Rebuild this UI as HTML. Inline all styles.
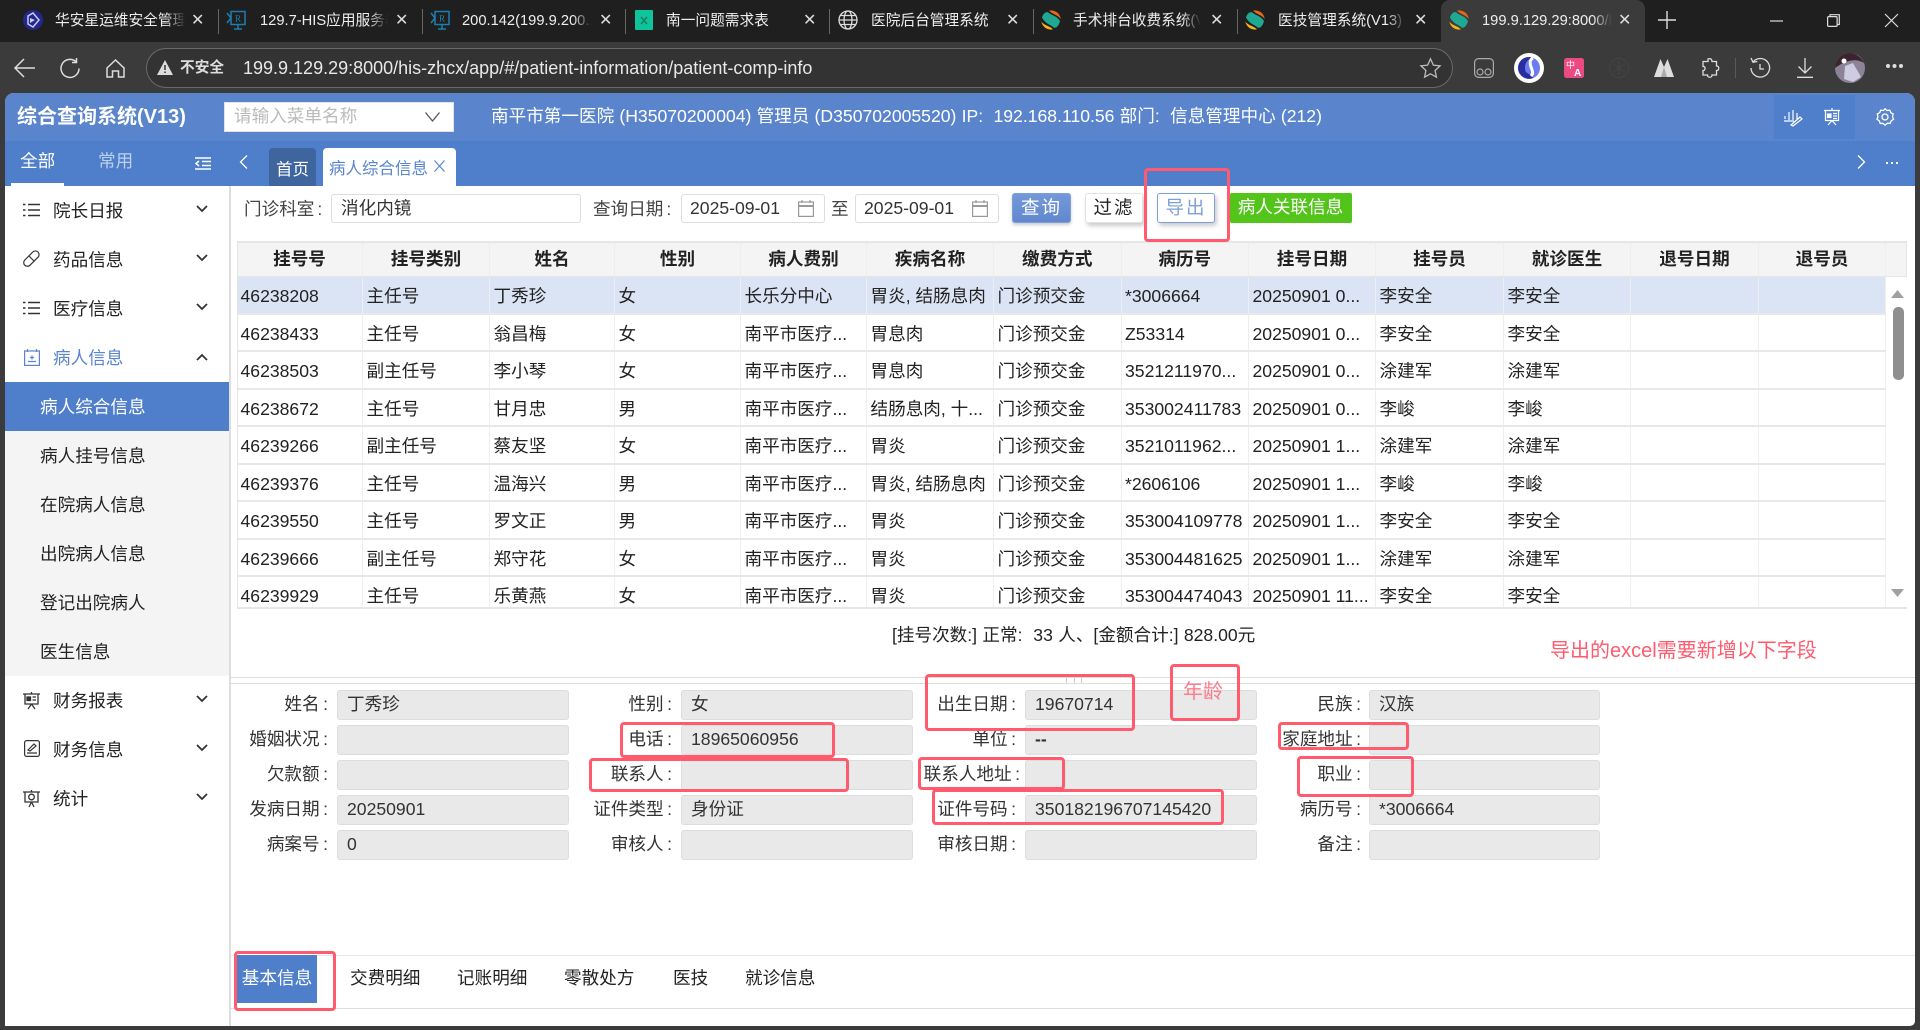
<!DOCTYPE html>
<html lang="zh-CN"><head><meta charset="utf-8"><title>综合查询系统(V13)</title>
<style>
*{box-sizing:border-box;margin:0;padding:0}
html,body{width:1920px;height:1030px;overflow:hidden;background:#3b3b3b;font-family:"Liberation Sans","Noto Sans CJK SC",sans-serif;font-size:17.6px;color:#222}
.a{position:absolute;white-space:nowrap}
svg{position:absolute;overflow:visible}
.tb{position:absolute;top:9px;height:26px;line-height:24px;font-size:14.7px;color:#eee;white-space:nowrap;overflow:hidden;-webkit-mask-image:linear-gradient(90deg,#000 85%,transparent);mask-image:linear-gradient(90deg,#000 85%,transparent)}
.sep{position:absolute;top:9px;width:1px;height:25px;background:#666}
.mi{position:absolute;left:53px;line-height:24px;height:24px;font-size:17.6px;color:#222;white-space:nowrap}
.si{position:absolute;left:40px;line-height:24px;height:24px;font-size:17.6px;color:#222;white-space:nowrap}
.ll{position:absolute;text-align:right;white-space:pre;line-height:30px;height:30px;color:#333;font-size:17.6px;word-spacing:-1.4px}
.in{position:absolute;width:232px;height:30px;background:#e9e9e9;border:1px solid #ddd;border-radius:3px;line-height:27px;padding-left:9px;color:#333;font-size:17.6px;white-space:nowrap}
.r{position:absolute;left:0;width:1649px;height:37.5px;display:flex;border-bottom:2px solid #e8e8e8;line-height:38px;background:#fff}
.r span{flex:0 0 127px;border-right:1px solid #eee;padding-left:3.5px;white-space:nowrap;overflow:hidden;color:#222;font-size:17.6px}
.r span:nth-child(1),.r span:nth-child(4),.r span:nth-child(5){flex-basis:126px}
.r span:nth-child(3){flex-basis:125px}
.r span:nth-child(7),.r span:nth-child(8){flex-basis:127.5px}
.r span:nth-child(10),.r span:nth-child(12){flex-basis:128px}
.r.h{background:#f4f4f4;height:36px;border-top:2px solid #e6e6e6;border-bottom:1px solid #e6e6e6;line-height:33px}
.r.h span{text-align:center;font-weight:bold;padding:0;color:#222}
.rb{position:absolute;border:3px solid #ff5a6e;border-radius:4px;pointer-events:none}
.tab2{position:absolute;top:966px;line-height:24px;color:#222;font-size:17.6px;white-space:nowrap}
</style></head><body>

<!-- browser tab strip -->
<div class="a" style="left:0;top:0;width:1920px;height:42px;background:#1f1f1f"></div>
<div class="a" style="left:1441px;top:0;width:204px;height:42px;background:#3b3b3b;border-radius:9px 9px 0 0"></div>

<svg style="left:23px;top:10px" width="20" height="20" viewBox="0 0 20 20"><circle cx="10" cy="10" r="10" fill="#23288a"/><path d="M5 6l5-3 6 7-6 7-5-3z" fill="none" stroke="#c8ccf0" stroke-width="1.500"/><path d="M7 8l5 2-5 3z" fill="#c8ccf0"/></svg>
<div class="tb" style="left:55px;width:130px">华安星运维安全管理</div>
<div class="a" style="left:191px;top:8px;color:#ddd;font-size:16px;line-height:26px">✕</div>
<div class="sep" style="left:218px"></div>
<svg style="left:226px;top:10px" width="20" height="20" viewBox="0 0 20 20"><rect x="5" y="1.500" width="14" height="13" fill="none" stroke="#1d7fb0" stroke-width="1.500"/><path d="M1 3l4 5-4 5M8 19h8M12 15v4" stroke="#1d7fb0" stroke-width="1.500" fill="none"/><text x="9" y="11.500" font-size="9" font-family="Liberation Serif" fill="#1d7fb0">R</text></svg>
<div class="tb" style="left:260px;width:128px">129.7-HIS应用服务器</div>
<div class="a" style="left:395px;top:8px;color:#ddd;font-size:16px;line-height:26px">✕</div>
<div class="sep" style="left:422px"></div>
<svg style="left:430px;top:10px" width="20" height="20" viewBox="0 0 20 20"><rect x="5" y="1.500" width="14" height="13" fill="none" stroke="#1d7fb0" stroke-width="1.500"/><path d="M1 3l4 5-4 5M8 19h8M12 15v4" stroke="#1d7fb0" stroke-width="1.500" fill="none"/><text x="9" y="11.500" font-size="9" font-family="Liberation Serif" fill="#1d7fb0">R</text></svg>
<div class="tb" style="left:462px;width:130px">200.142(199.9.200.142)</div>
<div class="a" style="left:599px;top:8px;color:#ddd;font-size:16px;line-height:26px">✕</div>
<div class="sep" style="left:625px"></div>
<svg style="left:635px;top:10px" width="18" height="20" viewBox="0 0 18 20"><rect width="18" height="20" rx="1" fill="#0fc49a"/><path d="M6 7l6 7M12 7l-6 7" stroke="#0a7f66" stroke-width="1.500"/></svg>
<div class="tb" style="left:666px;width:130px;-webkit-mask-image:none;mask-image:none">南一问题需求表</div>
<div class="a" style="left:803px;top:8px;color:#ddd;font-size:16px;line-height:26px">✕</div>
<div class="sep" style="left:829px"></div>
<svg style="left:838px;top:10px" width="20" height="20" viewBox="0 0 20 20" fill="none" stroke="#ddd" stroke-width="1.300"><circle cx="10" cy="10" r="9"/><ellipse cx="10" cy="10" rx="4" ry="9"/><path d="M1 10h18M2.500 5.500h15M2.500 14.500h15"/></svg>
<div class="tb" style="left:871px;width:122px;-webkit-mask-image:none;mask-image:none">医院后台管理系统</div>
<div class="a" style="left:1006px;top:8px;color:#ddd;font-size:16px;line-height:26px">✕</div>
<div class="sep" style="left:1033px"></div>
<svg style="left:1041px;top:10px" width="20" height="20" viewBox="0 0 20 20"><path d="M8 .7A9.500 9.500 0 0 1 19.700 9C17 5 12 4.500 8 .7z" fill="#e8671b"/><path d="M.4 11.500C3 15.500 8 15.500 12 19.300A9.500 9.500 0 0 1 .4 11.500z" fill="#f5b41f"/><path d="M1 7.500C2.500 2.500 6 1 8 3c3 2.500 8 3 11 8-1.500 6-5 8-7 6-3-2.500-8-3.500-11-9.500z" fill="#1fa892"/></svg>
<div class="tb" style="left:1073px;width:128px">手术排台收费系统(V13)</div>
<div class="a" style="left:1210px;top:8px;color:#ddd;font-size:16px;line-height:26px">✕</div>
<div class="sep" style="left:1237px"></div>
<svg style="left:1245px;top:10px" width="20" height="20" viewBox="0 0 20 20"><path d="M8 .7A9.500 9.500 0 0 1 19.700 9C17 5 12 4.500 8 .7z" fill="#e8671b"/><path d="M.4 11.500C3 15.500 8 15.500 12 19.300A9.500 9.500 0 0 1 .4 11.500z" fill="#f5b41f"/><path d="M1 7.500C2.500 2.500 6 1 8 3c3 2.500 8 3 11 8-1.500 6-5 8-7 6-3-2.500-8-3.500-11-9.500z" fill="#1fa892"/></svg>
<div class="tb" style="left:1278px;width:128px">医技管理系统(V13)</div>
<div class="a" style="left:1414px;top:8px;color:#ddd;font-size:16px;line-height:26px">✕</div>
<svg style="left:1449px;top:10px" width="20" height="20" viewBox="0 0 20 20"><path d="M8 .7A9.500 9.500 0 0 1 19.700 9C17 5 12 4.500 8 .7z" fill="#e8671b"/><path d="M.4 11.500C3 15.500 8 15.500 12 19.300A9.500 9.500 0 0 1 .4 11.500z" fill="#f5b41f"/><path d="M1 7.500C2.500 2.500 6 1 8 3c3 2.500 8 3 11 8-1.500 6-5 8-7 6-3-2.500-8-3.500-11-9.500z" fill="#1fa892"/></svg>
<div class="tb" style="left:1482px;width:130px">199.9.129.29:8000/his-zhcx</div>
<div class="a" style="left:1618px;top:8px;color:#ddd;font-size:16px;line-height:26px">✕</div>
<svg style="left:1658px;top:11px" width="18" height="18" viewBox="0 0 18 18" stroke="#ddd" stroke-width="1.400"><path d="M9 0v18M0 9h18"/></svg>
<svg style="left:1770px;top:20px" width="13" height="2" viewBox="0 0 13 2"><path d="M0 1h13" stroke="#ddd" stroke-width="1.200"/></svg>
<svg style="left:1827px;top:14px" width="13" height="13" viewBox="0 0 13 13" fill="none" stroke="#ddd" stroke-width="1.200"><rect x=".6" y="2.600" width="9.500" height="9.800" rx="1"/><path d="M3 2.600V.7h9.300v9.800h-2.200"/></svg>
<svg style="left:1885px;top:14px" width="13" height="13" viewBox="0 0 13 13" stroke="#ddd" stroke-width="1.200"><path d="M0 0l13 13M13 0L0 13"/></svg>

<!-- browser toolbar -->
<svg style="left:14px;top:58px" width="21" height="20" viewBox="0 0 21 20" fill="none" stroke="#ddd" stroke-width="1.500"><path d="M10 1L1 10l9 9M1 10h20"/></svg>
<svg style="left:60px;top:58px" width="21" height="21" viewBox="0 0 21 21" fill="none" stroke="#ddd" stroke-width="1.500"><path d="M19 10.500a9 9 0 1 1-3-6.800"/><path d="M16.500 0v4.500H12"/></svg>
<svg style="left:106px;top:59px" width="19" height="19" viewBox="0 0 19 19" fill="none" stroke="#ddd" stroke-width="1.500"><path d="M1 9l8.500-8L18 9v9h-5.500v-6h-6v6H1z"/></svg>
<div class="a" style="left:146px;top:48px;width:1307px;height:40px;border:1px solid #6a6a6a;border-radius:20px;background:#333"></div>
<svg style="left:157px;top:60px" width="16" height="15" viewBox="0 0 16 15"><path d="M8 0l8 15H0z" fill="#ddd"/><path d="M8 5v5M8 11.500v1.500" stroke="#333" stroke-width="1.500"/></svg>
<div class="a" style="left:180px;top:56px;line-height:24px;font-size:14.7px;font-weight:bold;color:#ddd">不安全</div>
<div class="a" style="left:243px;top:55px;line-height:26px;font-size:18px;color:#e8e8e8">199.9.129.29:8000/his-zhcx/app/#/patient-information/patient-comp-info</div>
<svg style="left:1420px;top:58px" width="21" height="20" viewBox="0 0 24 23" fill="none" stroke="#bbb" stroke-width="1.500"><path d="M12 1l3.300 7.200 7.700.9-5.700 5.300 1.500 7.600L12 18.200 5.200 22l1.500-7.600L1 9.100l7.700-.9z"/></svg>
<svg style="left:1474px;top:58px" width="20" height="20" viewBox="0 0 20 20" fill="none" stroke="#aaa" stroke-width="1.200"><rect x=".6" y=".6" width="18.800" height="18.800" rx="4"/><circle cx="6" cy="14" r="3"/><circle cx="14" cy="14" r="3"/></svg>
<svg style="left:1514px;top:53px" width="30" height="30" viewBox="0 0 30 30"><circle cx="15" cy="15" r="15" fill="#fff"/><circle cx="15" cy="15" r="11" fill="#6b7cf0"/><path d="M4 15a11 11 0 0 0 15 10c-3-6-8-3-8-10s4-8 6-10.800A11 11 0 0 0 4 15z" fill="#2a2e9c"/><path d="M19 5c-4 2-3 6-2 9s3 6 0 9" fill="none" stroke="#fff" stroke-width="3"/></svg>
<svg style="left:1564px;top:58px" width="20" height="20" viewBox="0 0 20 20"><rect width="20" height="20" rx="2.500" fill="#ec4a83"/><text x="2" y="10" font-size="9" fill="#fff" font-family="Noto Sans CJK SC">中</text><text x="10" y="18" font-size="10" fill="#fff" font-weight="bold" font-family="Liberation Sans">A</text></svg>
<svg style="left:1609px;top:58px" width="20" height="20" viewBox="0 0 20 20" fill="none" stroke="#444" stroke-width="1"><circle cx="10" cy="10" r="9.500"/><path d="M10 3v14M4 6l12 8M16 6L4 14"/></svg>
<svg style="left:1654px;top:59px" width="20" height="18" viewBox="0 0 20 18"><path d="M0 18L6.500 0 10 8l3.500-8L20 18z" fill="#ddd"/><path d="M10 8L7 18h6z" fill="#aaa"/></svg>
<svg style="left:1700px;top:58px" width="20" height="20" viewBox="0 0 20 20" fill="none" stroke="#ddd" stroke-width="1.300"><path d="M8 1c2-1 4 0 4 2.500h4.500V8c3-.5 3 5 0 4.500V17H12c.5 3-5 3-4.500 0H3v-4.500c2.500.5 3-4.500 0-4V3.500h5z"/></svg>
<div class="a" style="left:1735px;top:58px;width:1px;height:20px;background:#5a5a5a"></div>
<svg style="left:1750px;top:58px" width="20" height="21" viewBox="0 0 20 21" fill="none" stroke="#ddd" stroke-width="1.300"><path d="M3 4a9.300 9.300 0 1 1-2 6"/><path d="M1 0l2 4.300 4.300-.8"/><path d="M10 6v5h4"/></svg>
<svg style="left:1797px;top:58px" width="16" height="20" viewBox="0 0 16 20" fill="none" stroke="#ddd" stroke-width="1.300"><path d="M8 0v15M1.500 8.500L8 15l6.500-6.500M0 19.300h16"/></svg>
<svg style="left:1835px;top:53px" width="30" height="30" viewBox="0 0 30 30"><circle cx="15" cy="15" r="15" fill="#8d8396"/><path d="M0 15a15 15 0 0 1 15-15c6 0 12 5 14 10-8-5-18-3-29 5z" fill="#3b2330"/><path d="M10 13l8-3 8 14-8 5-9-3z" fill="#cfcbe0"/><circle cx="9" cy="8" r="2.500" fill="#fff"/></svg>
<div class="a" style="left:1886px;top:64px;width:4px;height:4px;border-radius:50%;background:#ddd;box-shadow:6.500px 0 #ddd,13px 0 #ddd"></div>

<!-- app frame -->
<div class="a" style="left:5px;top:93px;width:1910px;height:933px;background:#fff;border-radius:9px 9px 5px 5px;overflow:hidden">
  <div class="a" style="left:0;top:0;width:1910px;height:48px;background:#5a85cd"></div>
  <div class="a" style="left:0;top:48px;width:1910px;height:45px;background:#4f7fca"></div>
</div>
<div class="a" style="left:17px;top:101px;line-height:32px;font-size:20px;font-weight:bold;color:#fff">综合查询系统(V13)</div>
<div class="a" style="left:224px;top:102px;width:230px;height:30px;background:#fff;border:1px solid #e3e3e3;line-height:26px;padding-left:9px;color:#bbb;font-size:17.6px">请输入菜单名称</div>
<svg style="left:425px;top:112px" width="15" height="10" viewBox="0 0 15 10" fill="none" stroke="#555" stroke-width="1.300"><path d="M.5.5l7 8.500 7-8.500"/></svg>
<div class="a" style="left:491px;top:102px;line-height:28px;font-size:17.6px;color:#fff;word-spacing:.3px">南平市第一医院 (H35070200004) 管理员 (D350702005520) IP:&nbsp; 192.168.110.56 部门:&nbsp; 信息管理中心 (212)</div>
<div class="a" style="left:1774px;top:95px;width:81px;height:44px;background:#4f7fca"></div>
<svg style="left:1784px;top:108px" width="18" height="18" viewBox="0 0 18 18" fill="none" stroke="#fff" stroke-width="1.200"><path d="M1 8v3M5 4v8M9 2v10M13 5v6M0 13h10M7 17l9-8 2 2-9 7z"/></svg>
<svg style="left:1823px;top:108px" width="18" height="18" viewBox="0 0 18 18" fill="none" stroke="#fff" stroke-width="1.200"><path d="M1 2.500h16M2.500 2.500v10h13v-10M9 0v2.500M9 12.500L5 17M9 12.500l4 4.500"/><rect x="4.500" y="6" width="3.500" height="3.500" fill="#fff"/><path d="M10 5.500h4M10 8h4M10 10.500h4"/></svg>
<svg style="left:1876px;top:108px" width="18" height="18" viewBox="0 0 18 18" fill="none" stroke="#fff" stroke-width="1.300"><path d="M9 .8l2 1.700 2.800-.3 1 2.500 2.400 1.300-.7 2.700 1 2.600-2.300 1.500-.9 2.500-2.700-.1L9 17.200l-2.100-1.900-2.700.1-.9-2.500L1 11.300l1-2.600-.7-2.700 2.400-1.300 1-2.500 2.800.3z"/><circle cx="9" cy="9" r="3"/></svg>

<div class="a" style="left:20px;top:149px;line-height:24px;font-size:17.6px;color:#fff">全部</div>
<div class="a" style="left:98px;top:149px;line-height:24px;font-size:17.6px;color:#bcd0ec">常用</div>
<div class="a" style="left:11px;top:183px;width:53px;height:3px;background:#fff"></div>
<svg style="left:195px;top:157px" width="16" height="13" viewBox="0 0 16 13" stroke="#fff" stroke-width="1.500" fill="none"><path d="M0 1h16M7 4.500h9M7 8.500h9M0 12h16M4 4l-3 2.500L4 9"/></svg>
<svg style="left:239px;top:155px" width="9" height="14" viewBox="0 0 9 14" fill="none" stroke="#fff" stroke-width="1.300"><path d="M8 .5L1.500 7 8 13.500"/></svg>
<div class="a" style="left:269px;top:148px;width:47px;height:38px;background:#3f659f;border-radius:4px 4px 0 0;color:#fff;text-align:center;line-height:44px;font-size:16.5px">首页</div>
<div class="a" style="left:323px;top:148px;width:133px;height:38px;background:#fff;border-radius:4px 4px 0 0;color:#5a85cd;line-height:42px;font-size:16.5px;padding-left:6px">病人综合信息</div>
<svg style="left:434px;top:160px" width="11" height="12" viewBox="0 0 11 12" stroke="#5a85cd" stroke-width="1.200"><path d="M.5.500l10 11M10.500.500l-10 11"/></svg>
<svg style="left:1857px;top:155px" width="9" height="14" viewBox="0 0 9 14" fill="none" stroke="#fff" stroke-width="1.300"><path d="M1 .5L7.500 7 1 13.500"/></svg>
<div class="a" style="left:1886px;top:162px;width:2px;height:2px;background:#fff;box-shadow:5px 0 #fff,10px 0 #fff"></div>

<!-- sidebar -->
<div class="a" style="left:5px;top:186px;width:224px;height:840px;background:#fff"></div>
<div class="a" style="left:229px;top:186px;width:2px;height:840px;background:#dedede"></div>
<div class="a" style="left:5px;top:382px;width:224px;height:294px;background:#f4f4f4"></div>
<div class="a" style="left:5px;top:382px;width:224px;height:49px;background:#4f7fca"></div>

<svg style="left:23px;top:203px" width="17" height="14" viewBox="0 0 17 14" stroke="#333" stroke-width="1.600"><path d="M5 1.500h12M5 7h12M5 12.500h12M0 1.500h2.500M0 7h2.500M0 12.500h2.500"/></svg>
<div class="mi" style="top:199px">院长日报</div>
<svg style="left:23px;top:250px" width="17" height="17" viewBox="0 0 17 17" fill="none" stroke="#333" stroke-width="1.200"><path d="M1.800 10l8-8a3.600 3.600 0 0 1 5.200 5.200l-8 8A3.600 3.600 0 0 1 1.800 10zM6 6l5 5"/></svg>
<div class="mi" style="top:248px">药品信息</div>
<svg style="left:23px;top:301px" width="17" height="14" viewBox="0 0 17 14" stroke="#333" stroke-width="1.600"><path d="M5 1.500h12M5 7h12M5 12.500h12M0 1.500h2.500M0 7h2.500M0 12.500h2.500"/></svg>
<div class="mi" style="top:297px">医疗信息</div>
<svg style="left:24px;top:349px" width="16" height="17" viewBox="0 0 16 17" fill="none" stroke="#5a85cd" stroke-width="1.200"><rect x=".6" y="2" width="14.800" height="14.400"/><path d="M3.500 0v3M12.500 0v3M4 12.500h8M8 6.500v4M6 8.500h4"/></svg>
<div class="mi" style="top:346px;color:#5a85cd">病人信息</div>
<div class="si" style="top:395px;color:#fff">病人综合信息</div>
<div class="si" style="top:444px">病人挂号信息</div>
<div class="si" style="top:493px">在院病人信息</div>
<div class="si" style="top:542px">出院病人信息</div>
<div class="si" style="top:591px">登记出院病人</div>
<div class="si" style="top:640px">医生信息</div>
<svg style="left:23px;top:692px" width="17" height="17" viewBox="0 0 17 17" fill="none" stroke="#333" stroke-width="1.300"><path d="M0 2h17M2 2v10h13V2M8.500 0v2M8.500 12L5 17M8.500 12l3.500 5"/><rect x="4" y="5" width="3.500" height="3.500" fill="#333"/><path d="M9.500 5h3.500M9.500 8h3.500"/></svg>
<div class="mi" style="top:689px">财务报表</div>
<svg style="left:24px;top:740px" width="16" height="17" viewBox="0 0 16 17" fill="none" stroke="#333" stroke-width="1.200"><rect x=".6" y=".6" width="14.800" height="15.800" rx="2"/><path d="M4 10l6-6 2 2-6 5zM3 13h10"/></svg>
<div class="mi" style="top:738px">财务信息</div>
<svg style="left:23px;top:790px" width="17" height="17" viewBox="0 0 17 17" fill="none" stroke="#333" stroke-width="1.300"><path d="M0 2h17M2 2v10h13V2M8.500 0v2M8.500 12L6 17M8.500 12l2.500 5"/><circle cx="8.500" cy="7" r="2.800"/></svg>
<div class="mi" style="top:787px">统计</div>

<svg style="left:196px;top:205px" width="12" height="8" viewBox="0 0 12 8" fill="none" stroke="#333" stroke-width="1.800"><path d="M1 1l5 5 5-5"/></svg>
<svg style="left:196px;top:254px" width="12" height="8" viewBox="0 0 12 8" fill="none" stroke="#333" stroke-width="1.800"><path d="M1 1l5 5 5-5"/></svg>
<svg style="left:196px;top:303px" width="12" height="8" viewBox="0 0 12 8" fill="none" stroke="#333" stroke-width="1.800"><path d="M1 1l5 5 5-5"/></svg>
<svg style="left:196px;top:353px" width="12" height="8" viewBox="0 0 12 8" fill="none" stroke="#333" stroke-width="1.800"><path d="M1 7l5-5 5 5"/></svg>
<svg style="left:196px;top:695px" width="12" height="8" viewBox="0 0 12 8" fill="none" stroke="#333" stroke-width="1.800"><path d="M1 1l5 5 5-5"/></svg>
<svg style="left:196px;top:744px" width="12" height="8" viewBox="0 0 12 8" fill="none" stroke="#333" stroke-width="1.800"><path d="M1 1l5 5 5-5"/></svg>
<svg style="left:196px;top:793px" width="12" height="8" viewBox="0 0 12 8" fill="none" stroke="#333" stroke-width="1.800"><path d="M1 1l5 5 5-5"/></svg>

<!-- query bar -->
<div class="a" style="left:244px;top:195px;line-height:28px;color:#444">门诊科室<span style="margin-left:3px">:</span></div>
<div class="a" style="left:331px;top:194px;width:250px;height:29px;border:1px solid #ddd;border-radius:3px;line-height:26px;padding-left:9px;color:#333">消化内镜</div>
<div class="a" style="left:593px;top:195px;line-height:28px;color:#444">查询日期<span style="margin-left:3px">:</span></div>
<div class="a" style="left:681px;top:194px;width:144px;height:29px;border:1px solid #ddd;border-radius:3px;line-height:26px;padding-left:8px;color:#333">2025-09-01</div>
<svg style="left:798px;top:200px" width="16" height="17" viewBox="0 0 16 17" fill="none" stroke="#999" stroke-width="1.200"><rect x=".6" y="2" width="14.800" height="14.400"/><path d="M0 6h16" stroke-width="2"/><path d="M4 0v3M12 0v3"/></svg>
<div class="a" style="left:831px;top:195px;line-height:28px;color:#444">至</div>
<div class="a" style="left:855px;top:194px;width:144px;height:29px;border:1px solid #ddd;border-radius:3px;line-height:26px;padding-left:8px;color:#333">2025-09-01</div>
<svg style="left:972px;top:200px" width="16" height="17" viewBox="0 0 16 17" fill="none" stroke="#999" stroke-width="1.200"><rect x=".6" y="2" width="14.800" height="14.400"/><path d="M0 6h16" stroke-width="2"/><path d="M4 0v3M12 0v3"/></svg>
<div class="a" style="left:1012px;top:193px;width:59px;height:30px;background:linear-gradient(#7499d9,#6187cf);border:1px solid #7da0da;border-radius:3px;color:#fff;text-align:center;line-height:27px;font-size:18.5px;letter-spacing:2px;box-shadow:0 2px 3px #ccc">查询</div>
<div class="a" style="left:1085px;top:193px;width:58px;height:30px;background:#fff;border:1px solid #e3e3e3;border-radius:3px;color:#222;text-align:center;line-height:28px;font-size:18.5px;letter-spacing:2px;box-shadow:2px 3px 4px #ccc">过滤</div>
<div class="a" style="left:1157px;top:193px;width:58px;height:30px;background:#fff;border:1px solid #7da0da;border-radius:3px;color:#7da0da;text-align:center;line-height:28px;font-size:18.5px;letter-spacing:2px;box-shadow:2px 3px 4px #ccc">导出</div>
<div class="a" style="left:1230px;top:193px;width:122px;height:30px;background:#52c41a;border-radius:2px;color:#fff;text-align:center;line-height:29px;font-size:17.6px;text-indent:-1px">病人关联信息</div>

<!-- table -->
<div class="a" style="left:237px;top:241px;width:1649px;height:367px;overflow:hidden">
<div class="r h" style="top:0"><span>挂号号</span><span>挂号类别</span><span>姓名</span><span>性别</span><span>病人费别</span><span>疾病名称</span><span>缴费方式</span><span>病历号</span><span>挂号日期</span><span>挂号员</span><span>就诊医生</span><span>退号日期</span><span>退号员</span></div>
<div class="r" style="top:36px;background:#dbe4f4"><span>46238208</span><span>主任号</span><span>丁秀珍</span><span>女</span><span>长乐分中心</span><span>胃炎, 结肠息肉</span><span>门诊预交金</span><span>*3006664</span><span>20250901 0...</span><span>李安全</span><span>李安全</span><span></span><span></span></div>
<div class="r" style="top:73.500px"><span>46238433</span><span>主任号</span><span>翁昌梅</span><span>女</span><span>南平市医疗...</span><span>胃息肉</span><span>门诊预交金</span><span>Z53314</span><span>20250901 0...</span><span>李安全</span><span>李安全</span><span></span><span></span></div>
<div class="r" style="top:111px"><span>46238503</span><span>副主任号</span><span>李小琴</span><span>女</span><span>南平市医疗...</span><span>胃息肉</span><span>门诊预交金</span><span>3521211970...</span><span>20250901 0...</span><span>涂建军</span><span>涂建军</span><span></span><span></span></div>
<div class="r" style="top:148.500px"><span>46238672</span><span>主任号</span><span>甘月忠</span><span>男</span><span>南平市医疗...</span><span>结肠息肉, 十...</span><span>门诊预交金</span><span>353002411783</span><span>20250901 0...</span><span>李峻</span><span>李峻</span><span></span><span></span></div>
<div class="r" style="top:186px"><span>46239266</span><span>副主任号</span><span>蔡友坚</span><span>女</span><span>南平市医疗...</span><span>胃炎</span><span>门诊预交金</span><span>3521011962...</span><span>20250901 1...</span><span>涂建军</span><span>涂建军</span><span></span><span></span></div>
<div class="r" style="top:223.500px"><span>46239376</span><span>主任号</span><span>温海兴</span><span>男</span><span>南平市医疗...</span><span>胃炎, 结肠息肉</span><span>门诊预交金</span><span>*2606106</span><span>20250901 1...</span><span>李峻</span><span>李峻</span><span></span><span></span></div>
<div class="r" style="top:261px"><span>46239550</span><span>主任号</span><span>罗文正</span><span>男</span><span>南平市医疗...</span><span>胃炎</span><span>门诊预交金</span><span>353004109778</span><span>20250901 1...</span><span>李安全</span><span>李安全</span><span></span><span></span></div>
<div class="r" style="top:298.500px"><span>46239666</span><span>副主任号</span><span>郑守花</span><span>女</span><span>南平市医疗...</span><span>胃炎</span><span>门诊预交金</span><span>353004481625</span><span>20250901 1...</span><span>涂建军</span><span>涂建军</span><span></span><span></span></div>
<div class="r" style="top:336px"><span>46239929</span><span>主任号</span><span>乐黄燕</span><span>女</span><span>南平市医疗...</span><span>胃炎</span><span>门诊预交金</span><span>353004474043</span><span>20250901 11...</span><span>李安全</span><span>李安全</span><span></span><span></span></div>
</div>
<div class="a" style="left:237px;top:241px;width:1px;height:367px;background:#e6e6e6"></div>
<div class="a" style="left:237px;top:607px;width:1670px;height:2px;background:#e6e6e6"></div>
<div class="a" style="left:1886px;top:241px;width:21px;height:36px;background:#f4f4f4;border:1px solid #e6e6e6;border-width:2px 1px 1px 0"></div>
<svg style="left:1891px;top:290px" width="13" height="8" viewBox="0 0 13 8"><path d="M6.500 0L13 8H0z" fill="#a0a0a0"/></svg>
<div class="a" style="left:1893px;top:307px;width:11px;height:73px;background:#8f8f8f;border-radius:5px"></div>
<svg style="left:1891px;top:589px" width="13" height="8" viewBox="0 0 13 8"><path d="M0 0h13L6.500 8z" fill="#a0a0a0"/></svg>

<div class="a" style="left:892px;top:621px;line-height:28px;color:#222;word-spacing:.5px">[挂号次数:] 正常:&nbsp; 33 人、[金额合计:] 828.00元</div>
<div class="a" style="left:1550px;top:637px;line-height:28px;font-size:20px;color:#ff5a6e">导出的excel需要新增以下字段</div>

<div class="a" style="left:231px;top:677px;width:1684px;height:1px;background:#ddd"></div>
<div class="a" style="left:231px;top:683px;width:1684px;height:1px;background:#ddd"></div>
<div class="a" style="left:1066px;top:678px;width:16px;height:5px;border-left:1px solid #ccc;border-right:1px solid #ccc"></div>
<div class="a" style="left:1074px;top:678px;width:1px;height:5px;background:#ccc"></div>

<!-- form -->
<div class="ll" style="left:231px;width:97px;top:689px">姓名 :</div><div class="in" style="left:337px;top:690px">丁秀珍</div>
<div class="ll" style="left:590px;width:82px;top:689px">性别 :</div><div class="in" style="left:681px;top:690px">女</div>
<div class="ll" style="left:920px;width:96px;top:689px">出生日期 :</div><div class="in" style="left:1025px;top:690px">19670714</div>
<div class="ll" style="left:1270px;width:91px;top:689px">民族 :</div><div class="in" style="left:1369px;top:690px;width:231px">汉族</div>

<div class="ll" style="left:231px;width:97px;top:724px">婚姻状况 :</div><div class="in" style="left:337px;top:725px"></div>
<div class="ll" style="left:590px;width:82px;top:724px">电话 :</div><div class="in" style="left:681px;top:725px">18965060956</div>
<div class="ll" style="left:920px;width:96px;top:724px">单位 :</div><div class="in" style="left:1025px;top:725px;font-weight:bold">--</div>
<div class="ll" style="left:1270px;width:91px;top:724px">家庭地址 :</div><div class="in" style="left:1369px;top:725px;width:231px"></div>

<div class="ll" style="left:231px;width:97px;top:759px">欠款额 :</div><div class="in" style="left:337px;top:760px"></div>
<div class="ll" style="left:590px;width:82px;top:759px">联系人 :</div><div class="in" style="left:681px;top:760px"></div>
<div class="ll" style="left:910px;width:110px;top:759px">联系人地址 :</div><div class="in" style="left:1025px;top:760px"></div>
<div class="ll" style="left:1270px;width:91px;top:759px">职业 :</div><div class="in" style="left:1369px;top:760px;width:231px"></div>

<div class="ll" style="left:231px;width:97px;top:794px">发病日期 :</div><div class="in" style="left:337px;top:795px">20250901</div>
<div class="ll" style="left:590px;width:82px;top:794px">证件类型 :</div><div class="in" style="left:681px;top:795px">身份证</div>
<div class="ll" style="left:920px;width:96px;top:794px">证件号码 :</div><div class="in" style="left:1025px;top:795px">350182196707145420</div>
<div class="ll" style="left:1270px;width:91px;top:794px">病历号 :</div><div class="in" style="left:1369px;top:795px;width:231px">*3006664</div>

<div class="ll" style="left:231px;width:97px;top:829px">病案号 :</div><div class="in" style="left:337px;top:830px">0</div>
<div class="ll" style="left:590px;width:82px;top:829px">审核人 :</div><div class="in" style="left:681px;top:830px"></div>
<div class="ll" style="left:920px;width:96px;top:829px">审核日期 :</div><div class="in" style="left:1025px;top:830px"></div>
<div class="ll" style="left:1270px;width:91px;top:829px">备注 :</div><div class="in" style="left:1369px;top:830px;width:231px"></div>

<!-- bottom tabs -->
<div class="a" style="left:231px;top:955px;width:1684px;height:1px;background:#e6e6e6"></div>
<div class="a" style="left:231px;top:1008px;width:1684px;height:1px;background:#ddd"></div>
<div class="a" style="left:237px;top:955px;width:80px;height:48px;background:#4f7fca;color:#fff;text-align:center;line-height:46px;font-size:17.6px">基本信息</div>
<div class="tab2" style="left:350px">交费明细</div>
<div class="tab2" style="left:457px">记账明细</div>
<div class="tab2" style="left:564px">零散处方</div>
<div class="tab2" style="left:673px">医技</div>
<div class="tab2" style="left:745px">就诊信息</div>

<!-- annotations -->
<div class="rb" style="left:1144px;top:168px;width:86px;height:74px"></div>
<div class="rb" style="left:925px;top:674px;width:210px;height:57px"></div>
<div class="rb" style="left:1170px;top:664px;width:70px;height:57px"></div>
<div class="a" style="left:1183px;top:678px;line-height:28px;font-size:20px;color:#ff7a8a">年龄</div>
<div class="rb" style="left:620px;top:722px;width:215px;height:36px"></div>
<div class="rb" style="left:1278px;top:722px;width:131px;height:28px"></div>
<div class="rb" style="left:589px;top:758px;width:260px;height:34px"></div>
<div class="rb" style="left:918px;top:757px;width:147px;height:33px"></div>
<div class="rb" style="left:1297px;top:756px;width:117px;height:41px"></div>
<div class="rb" style="left:932px;top:789px;width:292px;height:36px"></div>
<div class="rb" style="left:234px;top:951px;width:102px;height:60px"></div>
</body></html>
